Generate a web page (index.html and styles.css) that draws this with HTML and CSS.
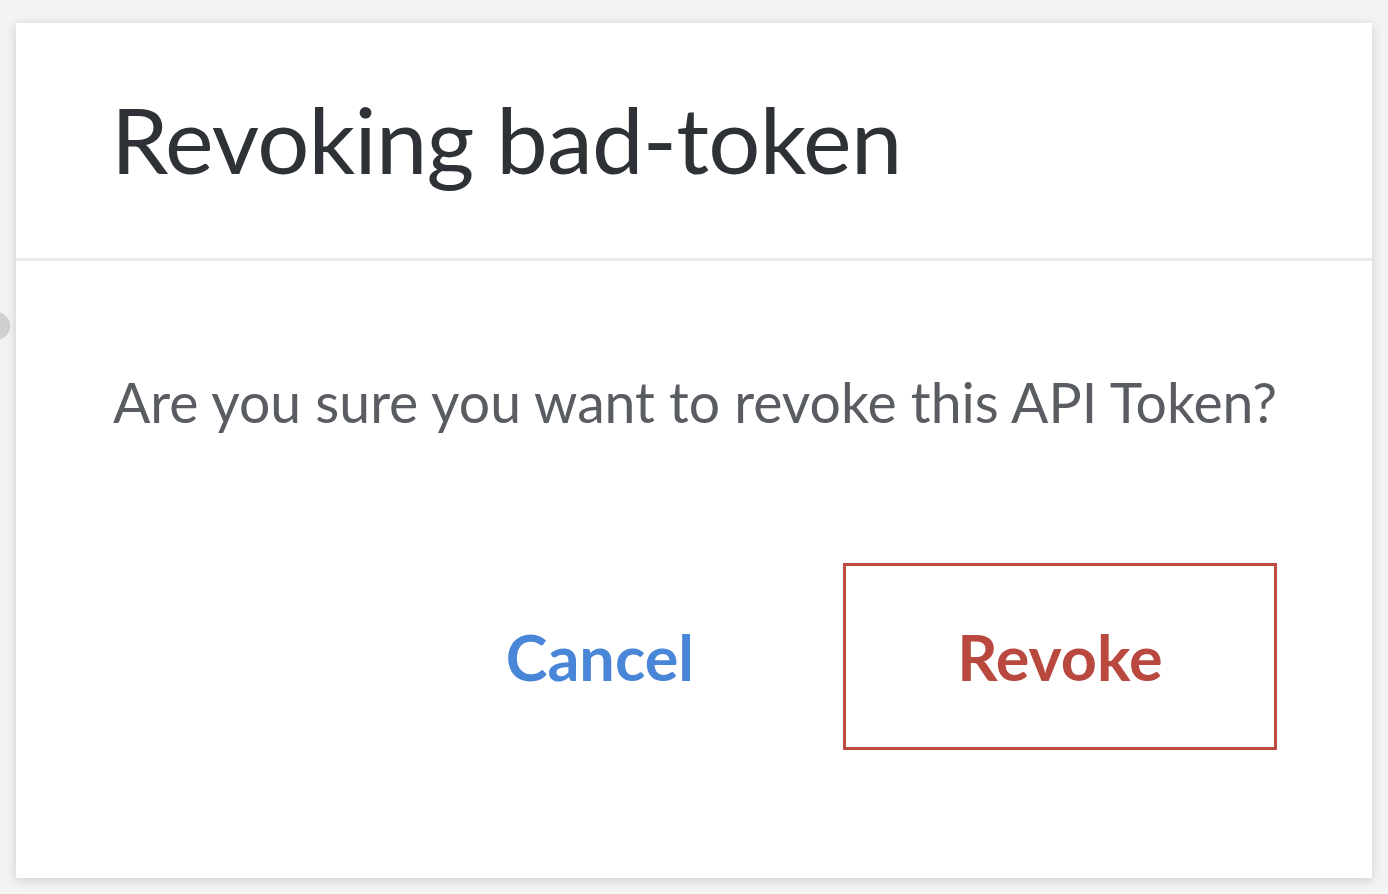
FILE: index.html
```html
<!DOCTYPE html>
<html lang="en">
<head>
<meta charset="utf-8">
<title>Revoking bad-token</title>
<link rel="stylesheet" href="styles.css">
</head>
<body>
<div class="backdrop-dot"></div>
<div class="modal" role="dialog" aria-labelledby="modal-title">
  <div class="modal-header">
    <h1 class="modal-title" id="modal-title">Revoking bad-token</h1>
  </div>
  <div class="modal-body">
    <p class="modal-text">Are you sure you want to revoke this API Token?</p>
    <div class="modal-actions">
      <button class="btn btn-link" type="button">Cancel</button>
      <button class="btn btn-danger" type="button">Revoke</button>
    </div>
  </div>
</div>
</body>
</html>
```

FILE: styles.css
```css
* { box-sizing: border-box; }

html, body {
  margin: 0;
  height: 100%;
}

body {
  background: #f3f3f3;
  font-family: Lato, "Open Sans", sans-serif;
  padding: 23px 16px 16px 16px;
  overflow: hidden;
  position: relative;
}

.backdrop-dot {
  position: absolute;
  left: -18px;
  top: 312px;
  width: 28px;
  height: 28px;
  border-radius: 50%;
  background: #cfcfcf;
}

.modal {
  position: relative;
  width: 1356px;
  height: 855px;
  background: #ffffff;
  box-shadow: 0 2px 10px rgba(0, 0, 0, 0.16);
  display: flex;
  flex-direction: column;
}

.modal-header {
  padding: 61px 94px 0 95px;
  height: 238px;
  border-bottom: 3px solid #e9e9e9;
}

.modal-title {
  margin: 0;
  font-size: 92px;
  font-weight: 400;
  letter-spacing: -0.75px;
  line-height: 1.2;
  color: #2e3136;
}

.modal-body {
  flex: 1;
  padding: 108px 95px 0 97px;
  display: flex;
  flex-direction: column;
}

.modal-text {
  margin: 0;
  font-size: 55.3px;
  line-height: 1.2;
  color: #595c61;
}

.modal-actions {
  margin-top: 128px;
  display: flex;
  justify-content: flex-end;
  align-items: center;
  gap: 149px;
}

.btn {
  font-family: Lato, "Open Sans", sans-serif;
  font-weight: 700;
  font-size: 63px;
  line-height: 1.2;
  background: transparent;
  border: 0;
  padding: 0;
  cursor: pointer;
}

.btn-link {
  color: #4a86d8;
}

.btn-danger {
  width: 434px;
  height: 187px;
  border: 3px solid #bf4c43;
  color: #b9483f;
}
```
